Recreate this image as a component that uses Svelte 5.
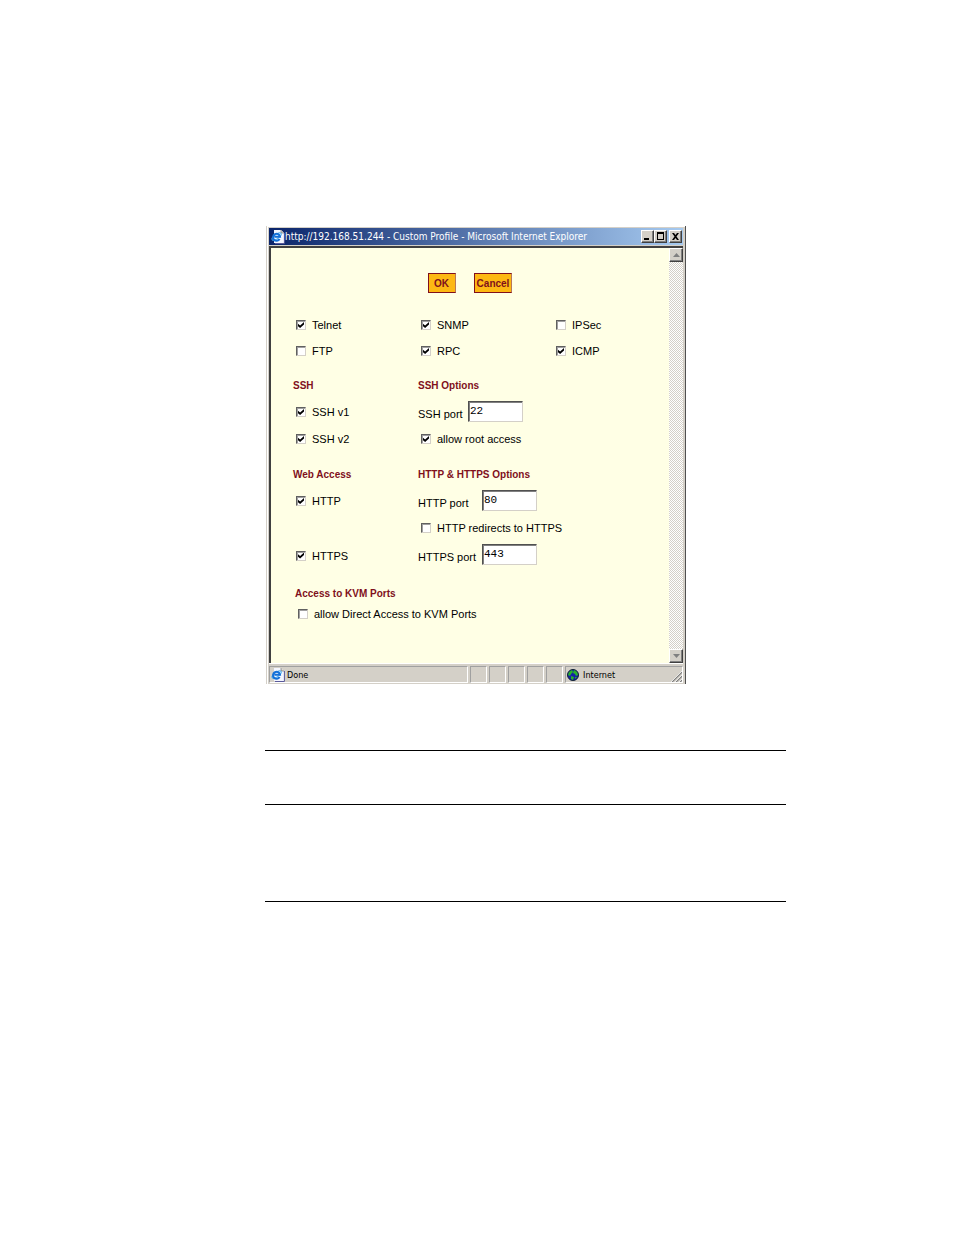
<svelte:options runes />
<script lang="ts">
  interface Service {
    id: string;
    label: string;
    enabled: boolean;
  }

  // Laid out row by row, three to a row
  let services: Service[] = $state([
    { id: 'telnet', label: 'Telnet', enabled: true },
    { id: 'snmp', label: 'SNMP', enabled: true },
    { id: 'ipsec', label: 'IPSec', enabled: false },
    { id: 'ftp', label: 'FTP', enabled: false },
    { id: 'rpc', label: 'RPC', enabled: true },
    { id: 'icmp', label: 'ICMP', enabled: true },
  ]);

  let sshV1 = $state(true);
  let sshV2 = $state(true);
  let sshPort = $state('22');
  let rootAccess = $state(true);

  let http = $state(true);
  let https = $state(true);
  let httpPort = $state('80');
  let httpsPort = $state('443');
  let redirect = $state(false);

  let kvmDirect = $state(false);

  const emptyPanes = [1, 2, 3, 4, 5];
</script>

{#snippet pageIcon()}
  <svg class="page-icon" width="14" height="15" viewBox="0 0 14 15" aria-hidden="true">
    <path d="M3 1h7l3 3v10H3z" fill="#f4f6ff" />
    <path d="M10 1v3h3" fill="#d4d0c8" stroke="#777" stroke-width=".7" />
    <path d="M13.4 4v10.500H4" fill="none" stroke="#5a5a9a" />
    <ellipse cx="5.6" cy="7.6" rx="5.4" ry="2.200" transform="rotate(-35 5.6 7.6)" fill="none" stroke="#4ab0ee" stroke-width="1" />
    <path d="M8.6 10A3.500 3.500 0 1 1 9 7.8H3.400" fill="none" stroke="#1470d8" stroke-width="2" />
  </svg>
{/snippet}

<main class="page">
  <section class="window" aria-label="Custom Profile">
    <header class="titlebar">
      {@render pageIcon()}
      <h1>http://192.168.51.244 - Custom Profile - Microsoft Internet Explorer</h1>
      <div class="window-buttons">
        <button type="button" aria-label="Minimize">
          <svg width="9" height="9" viewBox="0 0 9 9"><path d="M1 6h5v2H1z" /></svg>
        </button>
        <button type="button" aria-label="Maximize">
          <svg width="9" height="9" viewBox="0 0 9 9"><path d="M1 0h7v8H1zM2 2v5h5V2z" fill-rule="evenodd" /></svg>
        </button>
        <button class="close" type="button" aria-label="Close">
          <svg width="9" height="9" viewBox="0 0 9 9"><path d="M1 1h2l1.500 2L6 1h2L5.500 4.500 8 8H6L4.500 6 3 8H1l2.500-3.500z" /></svg>
        </button>
      </div>
    </header>

    <div class="viewport">
      <form onsubmit={(e) => e.preventDefault()}>
        <div class="actions">
          <button type="submit">OK</button>
          <button type="button">Cancel</button>
        </div>

        <div class="grid services">
          {#each services as service (service.id)}
            <label class="check"><input type="checkbox" bind:checked={service.enabled} />{service.label}</label>
          {/each}
        </div>

        <div class="grid ssh">
          <h2>SSH</h2>
          <h2 class="wide">SSH Options</h2>
          <label class="check"><input type="checkbox" bind:checked={sshV1} />SSH v1</label>
          <div class="port wide">
            <label for="ssh-port">SSH port</label>
            <input id="ssh-port" type="text" bind:value={sshPort} />
          </div>
          <label class="check"><input type="checkbox" bind:checked={sshV2} />SSH v2</label>
          <label class="check wide"><input type="checkbox" bind:checked={rootAccess} />allow root access</label>
        </div>

        <div class="grid web">
          <h2>Web Access</h2>
          <h2 class="wide">HTTP &amp; HTTPS Options</h2>
          <label class="check"><input type="checkbox" bind:checked={http} />HTTP</label>
          <div class="port wide">
            <label for="http-port">HTTP port</label>
            <input id="http-port" type="text" bind:value={httpPort} />
          </div>
          <label class="check wide"><input type="checkbox" bind:checked={redirect} />HTTP redirects to HTTPS</label>
          <label class="check"><input type="checkbox" bind:checked={https} />HTTPS</label>
          <div class="port wide">
            <label for="https-port">HTTPS port</label>
            <input id="https-port" type="text" bind:value={httpsPort} />
          </div>
        </div>

        <div class="kvm">
          <h2>Access to KVM Ports</h2>
          <label class="check"><input type="checkbox" bind:checked={kvmDirect} />allow Direct Access to KVM Ports</label>
        </div>
      </form>

      <div class="scrollbar">
        <button type="button" aria-label="Scroll up">
          <svg width="7" height="4" viewBox="0 0 7 4"><path d="M3.500 0L7 4H0z" /></svg>
        </button>
        <button type="button" aria-label="Scroll down">
          <svg width="7" height="4" viewBox="0 0 7 4"><path d="M0 0h7L3.500 4z" /></svg>
        </button>
      </div>
    </div>

    <footer class="statusbar">
      <div class="pane status">{@render pageIcon()}<span>Done</span></div>
      {#each emptyPanes as pane (pane)}
        <div class="pane"></div>
      {/each}
      <div class="pane zone">
        <svg width="12" height="12" viewBox="0 0 12 12" aria-hidden="true">
          <circle cx="6" cy="6" r="5.500" fill="#1420a8" stroke="#102030" />
          <path d="M2 3l3-2 1 2-2 2-1 2-2-1zM7 1l3 2 1 3-2 1-1-2-2-1zM4 7l3 1-1 3-2-1zM8 8l2 0-2 2z" fill="#28b428" />
        </svg>
        <span>Internet</span>
        <svg class="grip" width="11" height="11" viewBox="0 0 11 11" aria-hidden="true">
          <path d="M1 11L11 1M5 11l6-6M9 11l2-2" stroke="#808080" stroke-width="1.300" />
          <path d="M0 11L11 0M4 11l7-7M8 11l3-3" stroke="#fff" stroke-width=".7" />
        </svg>
      </div>
    </footer>
  </section>

  <hr class="first" />
  <hr class="second" />
  <hr class="third" />
</main>

<style>
  :global(body) {
    margin: 0;
    background: #fff;
  }

  .page {
    padding: 226px 168px 64px 265px;
    color: #000;
    font: 11px/14px 'Liberation Sans', Arial, sans-serif;
  }

  .window {
    box-sizing: border-box;
    max-width: 420px;
    margin-left: 1px;
    padding: 2px 1px 1px;
    background: #d4d0c8;
    border-left: 1px solid #d4d0c8;
    border-right: 1px solid #505050;
    box-shadow: inset 1px 1px #fff;
  }

  .titlebar {
    display: flex;
    align-items: center;
    height: 17px;
    margin: 0 1px;
    padding: 0 1px 0 2px;
    background: linear-gradient(90deg, #0a246a, #a6caf0);
  }

  .page-icon {
    flex: none;
  }

  h1 {
    flex: 1;
    margin: 0;
    color: #fff;
    font: 10px/14px 'DejaVu Sans Condensed', Tahoma, sans-serif;
    white-space: nowrap;
  }

  button {
    padding: 0;
    font-family: inherit;
  }

  .window-buttons {
    display: flex;
  }

  .window-buttons button,
  .scrollbar button {
    display: flex;
    align-items: center;
    justify-content: center;
    box-sizing: border-box;
    width: 13px;
    height: 13px;
    background: #d4d0c8;
    border: 1px solid;
    border-color: #fff #404040 #404040 #fff;
    box-shadow: inset -1px -1px #808080;
  }

  .window-buttons .close {
    margin-left: 2px;
  }

  .viewport {
    display: flex;
    margin: 1px 1px 0;
    border: solid #404040;
    border-width: 2px 0 0 2px;
  }

  form {
    flex: 1;
    padding: 25px 0 39px 22px;
    background: #ffffe5;
  }

  .actions {
    display: flex;
    justify-content: center;
    gap: 18px;
    margin: 0 0 19px -22px;
  }

  .actions button {
    min-width: 28px;
    height: 20px;
    padding: 0 2px;
    border: 1px solid #80101c;
    border-right-color: #b87858;
    background: #fdb813;
    color: #80101c;
    font-size: 10px;
    font-weight: bold;
  }

  .grid {
    display: grid;
    grid-template-columns: 125px 135px 1fr;
    align-items: center;
    margin-bottom: 9px;
  }

  .services {
    grid-auto-rows: 26px;
  }

  .ssh {
    grid-template-rows: 26px 26px 28px;
  }

  .web {
    grid-template-rows: 26px 26px 28px 27px;
    margin-bottom: 15px;
  }

  .wide {
    grid-column: 2 / 4;
  }

  h2 {
    margin: 0;
    color: #80101c;
    font-size: 10px;
    line-height: 14px;
  }

  .check {
    display: flex;
    align-items: center;
    gap: 6px;
    padding-left: 3px;
    white-space: nowrap;
  }

  .check input {
    position: relative;
    flex: none;
    box-sizing: border-box;
    width: 10px;
    height: 10px;
    margin: 0;
    appearance: none;
    background: #fff;
    border: 1px solid;
    border-color: #606060 #d4d0c8 #d4d0c8 #606060;
    box-shadow: inset 1px 1px #a0a0a0;
  }

  .check input:checked::after {
    content: '';
    position: absolute;
    inset: 1px;
    background: #000;
    clip-path: polygon(0 30%, 35% 60%, 100% 0, 100% 40%, 35% 100%, 0 70%);
  }

  .port {
    display: flex;
    align-items: flex-end;
  }

  .port label {
    min-width: 50px;
    margin-bottom: 3px;
  }

  .web .port label {
    min-width: 64px;
  }

  .port input {
    box-sizing: border-box;
    width: 55px;
    height: 21px;
    margin-bottom: 2px;
    padding: 0 1px 1px;
    background: #fff;
    border: 1px solid;
    border-color: #505050 #d4d0c8 #d4d0c8 #505050;
    box-shadow: inset 1px 1px #808080;
    color: #000;
    font: 11px 'Liberation Mono', 'Courier New', monospace;
  }

  .kvm {
    padding-left: 2px;
  }

  .kvm h2,
  .kvm .check {
    line-height: 20px;
  }

  .scrollbar {
    display: flex;
    flex-direction: column;
    justify-content: space-between;
    width: 14px;
    background: repeating-conic-gradient(#d4d0c8 0 25%, #fff 0 50%) 0 0 / 2px 2px;
  }

  .scrollbar button {
    width: 14px;
    height: 14px;
  }

  .scrollbar path {
    fill: #808080;
  }

  .statusbar {
    display: flex;
    gap: 2px;
    margin: 0 1px;
    padding-top: 2px;
    border-top: 1px solid #fff;
    font: 9px/14px 'DejaVu Sans Condensed', Tahoma, sans-serif;
  }

  .pane {
    display: flex;
    align-items: center;
    box-sizing: border-box;
    width: 17px;
    height: 17px;
    border: 1px solid;
    border-color: #a0a0a0 #fff #fff #a0a0a0;
  }

  .status {
    flex: 1;
    gap: 2px;
    padding-left: 1px;
  }

  .zone {
    gap: 4px;
    width: 118px;
    padding-left: 1px;
  }

  .grip {
    align-self: flex-end;
    margin-left: auto;
  }

  hr {
    height: 1px;
    margin: 0;
    border: 0;
    background: #000;
  }

  .first {
    margin-top: 66px;
  }

  .second {
    margin-top: 53px;
  }

  .third {
    margin-top: 96px;
  }
</style>
